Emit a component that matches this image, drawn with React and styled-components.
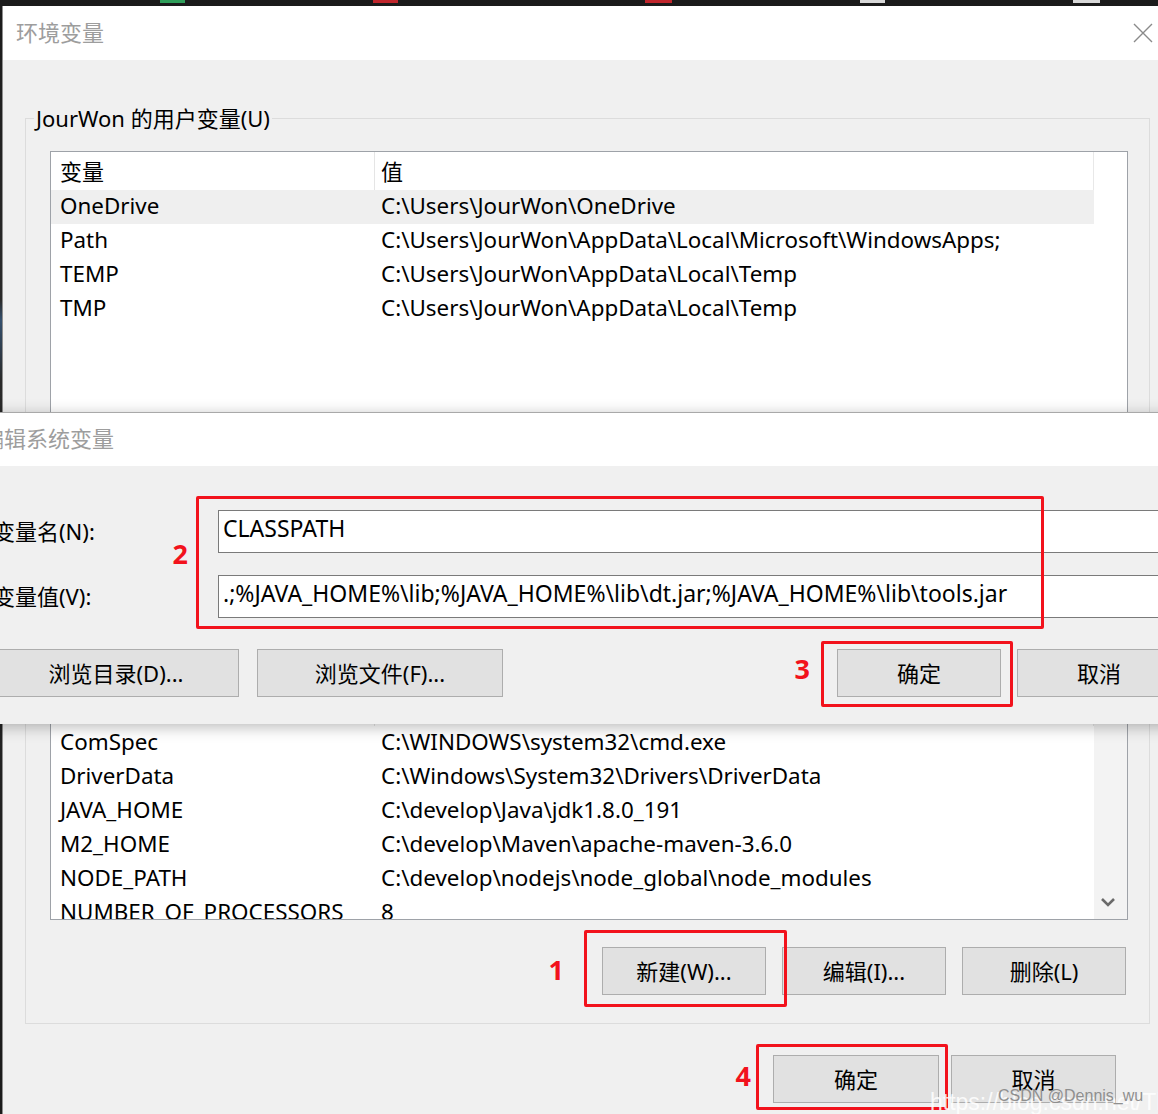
import styled, { createGlobalStyle } from "styled-components";

const GlobalStyle = createGlobalStyle`
  html, body {
    margin: 0;
    padding: 0;
  }
  body {
    background: #1f1f1f;
    font-family: "Noto Sans", "Noto Sans CJK SC", sans-serif;
    color: #000;
  }
`;

const USER_VARS = [
  { name: "OneDrive", value: "C:\\Users\\JourWon\\OneDrive", selected: true },
  { name: "Path", value: "C:\\Users\\JourWon\\AppData\\Local\\Microsoft\\WindowsApps;" },
  { name: "TEMP", value: "C:\\Users\\JourWon\\AppData\\Local\\Temp" },
  { name: "TMP", value: "C:\\Users\\JourWon\\AppData\\Local\\Temp" },
];

const SYSTEM_VARS = [
  { name: "ComSpec", value: "C:\\WINDOWS\\system32\\cmd.exe" },
  { name: "DriverData", value: "C:\\Windows\\System32\\Drivers\\DriverData" },
  { name: "JAVA_HOME", value: "C:\\develop\\Java\\jdk1.8.0_191" },
  { name: "M2_HOME", value: "C:\\develop\\Maven\\apache-maven-3.6.0" },
  { name: "NODE_PATH", value: "C:\\develop\\nodejs\\node_global\\node_modules" },
  { name: "NUMBER_OF_PROCESSORS", value: "8" },
];

// --- desktop & windows -------------------------------------------
const Desktop = styled.div`
  position: relative;
  width: 1158px;
  height: 1114px;
  overflow: hidden;
  background:
    linear-gradient(90deg,
      transparent 160px, #2f9e5a 160px, #2f9e5a 185px, transparent 185px,
      transparent 373px, #c0262c 373px, #c0262c 398px, transparent 398px,
      transparent 645px, #c0262c 645px, #c0262c 672px, transparent 672px,
      transparent 860px, #d8d8d8 860px, #d8d8d8 885px, transparent 885px,
      transparent 1073px, #d8d8d8 1073px, #d8d8d8 1100px, transparent 1100px)
      top left / 100% 3px no-repeat,
    linear-gradient(180deg, #1b1b1b 0, #2a2a2a 300px, #34506e 320px, #2a2a2a 380px, #1b1b1b 100%);
`;

const MainWindow = styled.div`
  position: absolute;
  left: 2px;
  top: 6px;
  width: 1156px;
  height: 1108px;
  display: flex;
  flex-direction: column;
  border-left: 1px solid #8e8e8e;
  background: #f0f0f0;
`;

const TitleBar = styled.div`
  display: flex;
  align-items: center;
  justify-content: space-between;
  flex: none;
  height: ${(p) => p.$height}px;
  padding: 0 6px 0 ${(p) => p.$indent}px;
  background: #fff;
`;

const TitleText = styled.span`
  margin-bottom: 3px;
  font-size: 22px;
  line-height: 1;
  color: #9d9d9d;
  white-space: nowrap;
`;

const CloseButton = styled.span`
  display: flex;
  width: 20px;
  height: 20px;
`;

const MainBody = styled.div`
  flex: 1;
  padding: 45px 9px 0 22px;
`;

// --- group boxes & list views --------------------------------------
const GroupBox = styled.fieldset`
  margin: ${(p) => p.$gapTop || 0}px 0 0;
  padding: 20px 21px ${(p) => p.$padBottom}px 8px;
  border: 1px solid #dcdcdc;
  min-width: 0;
`;

const Legend = styled.legend`
  padding: 0 2px;
  font-size: 22px;
  line-height: 26px;
  white-space: nowrap;
`;

const ListView = styled.div`
  display: grid;
  grid-template-columns: 1fr 33px;
  grid-template-rows: minmax(0, 1fr);
  box-sizing: border-box;
  height: ${(p) => p.$height}px;
  margin-left: 16px;
  border: 1px solid #9ea2a8;
  background: #fff;
  overflow: hidden;
`;

const ListColumn = styled.div`
  min-width: 0;
  min-height: 0;
  overflow: hidden;
`;

const HeaderRow = styled.div`
  display: grid;
  grid-template-columns: 324px 1fr;
  height: 38px;
  border-right: 1px solid #e8e8e8;
`;

const HeaderCell = styled.div`
  display: flex;
  align-items: center;
  padding: 0 0 3px ${(p) => (p.$first ? 9 : 6)}px;
  font-size: 22px;
  border-right: ${(p) => (p.$first ? "1px solid #e5e5e5" : "none")};
`;

const Row = styled.div`
  display: grid;
  grid-template-columns: 324px 1fr;
  height: 34px;
  align-items: start;
  background: ${(p) => (p.$selected ? "#efefef" : "transparent")};
`;

const Cell = styled.div`
  padding-left: ${(p) => (p.$first ? 9 : 6)}px;
  font-size: 22.4px;
  line-height: 32px;
  white-space: nowrap;
  overflow: hidden;
`;

const ScrollTrack = styled.div`
  display: flex;
  flex-direction: column;
  justify-content: flex-end;
  align-items: center;
  padding: 0 5px 12px 0;
  background: ${(p) => (p.$active ? "#f3f3f3" : "#fff")};
`;

// --- buttons --------------------------------------------------------
const ButtonRow = styled.div`
  display: flex;
  justify-content: ${(p) => p.$justify || "flex-end"};
  gap: ${(p) => p.$gap || 16}px;
  margin-top: ${(p) => p.$top}px;
  padding-right: ${(p) => p.$right || 0}px;
`;

const ButtonGroup = styled.div`
  display: flex;
  gap: ${(p) => p.$gap}px;
`;

const WinButton = styled.button`
  box-sizing: border-box;
  width: ${(p) => p.$width || 164}px;
  height: 48px;
  padding: 0 0 2px;
  border: 1px solid #adadad;
  background: #e1e1e1;
  font-family: inherit;
  font-size: 22px;
  color: #000;
  white-space: nowrap;
`;

// --- edit dialog (overlapping window) -----------------------------
const EditDialog = styled.div`
  position: absolute;
  left: -30px;
  top: 412px;
  width: 1234px;
  height: 311px;
  display: flex;
  flex-direction: column;
  border-top: 1px solid #a9a9a9;
  background: #f0f0f0;
  box-shadow: 0 3px 14px rgba(0, 0, 0, 0.28);
`;

const EditBody = styled.div`
  padding: 44px 23px 26px;
`;

const FieldGrid = styled.div`
  position: relative;
  display: grid;
  grid-template-columns: 225px 1fr;
  row-gap: 22px;
  align-items: center;
`;

const FieldLabel = styled.label`
  padding-bottom: 4px;
  font-size: 22px;
  white-space: nowrap;
`;

const TextInput = styled.input`
  box-sizing: border-box;
  width: 100%;
  height: 43px;
  padding: 0 4px 7px;
  border: 1px solid #7a7a7a;
  background: #fff;
  font-family: inherit;
  font-size: 23px;
  color: #000;
  outline: none;
`;

// --- annotations ------------------------------------------------------
const Marked = styled.span`
  position: relative;
  display: inline-flex;
`;

const RedFrame = styled.span`
  position: absolute;
  top: ${(p) => p.$t}px;
  right: ${(p) => p.$r}px;
  bottom: ${(p) => p.$b}px;
  left: ${(p) => p.$l}px;
  ${(p) => (p.$w ? `width: ${p.$w}px; right: auto;` : "")}
  ${(p) => (p.$h ? `height: ${p.$h}px; bottom: auto;` : "")}
  border: 3px solid #f2121c;
  border-radius: 2px;
  box-sizing: border-box;
  pointer-events: none;
`;

const StepNumber = styled.span`
  position: absolute;
  top: 50%;
  right: calc(100% + ${(p) => p.$gap}px);
  transform: translateY(calc(-50% + ${(p) => p.$dy}px));
  font-family: "Noto Sans", sans-serif;
  font-size: 27px;
  font-weight: 700;
  line-height: 1;
  color: #f2121c;
`;

const Watermark = styled.div`
  position: absolute;
  left: ${(p) => p.$x}px;
  top: ${(p) => p.$y}px;
  font-family: "Liberation Sans", Arial, sans-serif;
  font-size: ${(p) => p.$size}px;
  color: ${(p) => p.$color};
  white-space: nowrap;
  pointer-events: none;
`;

function CloseIcon() {
  return (
    <CloseButton>
      <svg width="20" height="20" viewBox="0 0 20 20">
        <path d="M1 1 L19 19 M19 1 L1 19" stroke="#8a8a8a" strokeWidth="1.4" />
      </svg>
    </CloseButton>
  );
}

function ChevronDown() {
  return (
    <svg width="16" height="10" viewBox="0 0 16 10">
      <polyline
        points="2,2 8,8 14,2"
        fill="none"
        stroke="#6a6a6a"
        strokeWidth="2.6"
      />
    </svg>
  );
}

function VariableList({ rows, height, withHeader, scrollable }) {
  return (
    <ListView $height={height}>
      <ListColumn>
        {withHeader && (
          <HeaderRow>
            <HeaderCell $first>变量</HeaderCell>
            <HeaderCell>值</HeaderCell>
          </HeaderRow>
        )}
        {rows.map((r) => (
          <Row key={r.name} $selected={r.selected}>
            <Cell $first>{r.name}</Cell>
            <Cell>{r.value}</Cell>
          </Row>
        ))}
      </ListColumn>
      <ScrollTrack $active={scrollable}>{scrollable && <ChevronDown />}</ScrollTrack>
    </ListView>
  );
}

export default function App() {
  return (
    <>
      <GlobalStyle />
      <Desktop>
        <MainWindow>
          <TitleBar $height={54} $indent={13}>
            <TitleText>环境变量</TitleText>
            <CloseIcon />
          </TitleBar>

          <MainBody>
            <GroupBox $padBottom={24}>
              <Legend>JourWon 的用户变量(U)</Legend>
              <VariableList rows={USER_VARS} height={400} withHeader />
            </GroupBox>

            <GroupBox $gapTop={65} $padBottom={28}>
              <Legend>系统变量(S)</Legend>
              <VariableList rows={SYSTEM_VARS} height={233} withHeader scrollable />
              <ButtonRow $top={27} $right={2}>
                <Marked>
                  <WinButton>新建(W)...</WinButton>
                  <RedFrame $t={-17} $r={-21} $b={-12} $l={-18}>
                    <StepNumber $gap={23} $dy={0}>1</StepNumber>
                  </RedFrame>
                </Marked>
                <WinButton>编辑(I)...</WinButton>
                <WinButton>删除(L)</WinButton>
              </ButtonRow>
            </GroupBox>

            <ButtonRow $top={31} $right={34} $gap={12}>
              <Marked>
                <WinButton $width={166}>确定</WinButton>
                <RedFrame $t={-11} $r={-9} $b={-7} $l={-17}>
                  <StepNumber $gap={8} $dy={-2}>4</StepNumber>
                </RedFrame>
              </Marked>
              <WinButton $width={165}>取消</WinButton>
            </ButtonRow>
          </MainBody>
        </MainWindow>

        <EditDialog>
          <TitleBar $height={53} $indent={12}>
            <TitleText>编辑系统变量</TitleText>
          </TitleBar>
          <EditBody>
            <FieldGrid>
              <FieldLabel>变量名(N):</FieldLabel>
              <TextInput readOnly value="CLASSPATH" />
              <FieldLabel>变量值(V):</FieldLabel>
              <TextInput
                readOnly
                value=".;%JAVA_HOME%\lib;%JAVA_HOME%\lib\dt.jar;%JAVA_HOME%\lib\tools.jar"
              />
              <RedFrame $t={-14} $l={203} $w={848} $h={133}>
                <StepNumber $gap={11} $dy={-10}>2</StepNumber>
              </RedFrame>
            </FieldGrid>

            <ButtonRow $top={31} $justify="space-between">
              <ButtonGroup $gap={18}>
                <WinButton $width={246}>浏览目录(D)...</WinButton>
                <WinButton $width={246}>浏览文件(F)...</WinButton>
              </ButtonGroup>
              <ButtonGroup $gap={16}>
                <Marked>
                  <WinButton>确定</WinButton>
                  <RedFrame $t={-8} $r={-12} $b={-10} $l={-16}>
                    <StepNumber $gap={14} $dy={-6}>3</StepNumber>
                  </RedFrame>
                </Marked>
                <WinButton>取消</WinButton>
              </ButtonGroup>
            </ButtonRow>
          </EditBody>
        </EditDialog>

        <Watermark $x={930} $y={1089} $size={23} $color="rgba(255,255,255,0.85)">
          https://blog.csdn.net/ThinkWon
        </Watermark>
        <Watermark $x={998} $y={1087} $size={16} $color="#8f8f8f">
          CSDN @Dennis_wu
        </Watermark>
      </Desktop>
    </>
  );
}
